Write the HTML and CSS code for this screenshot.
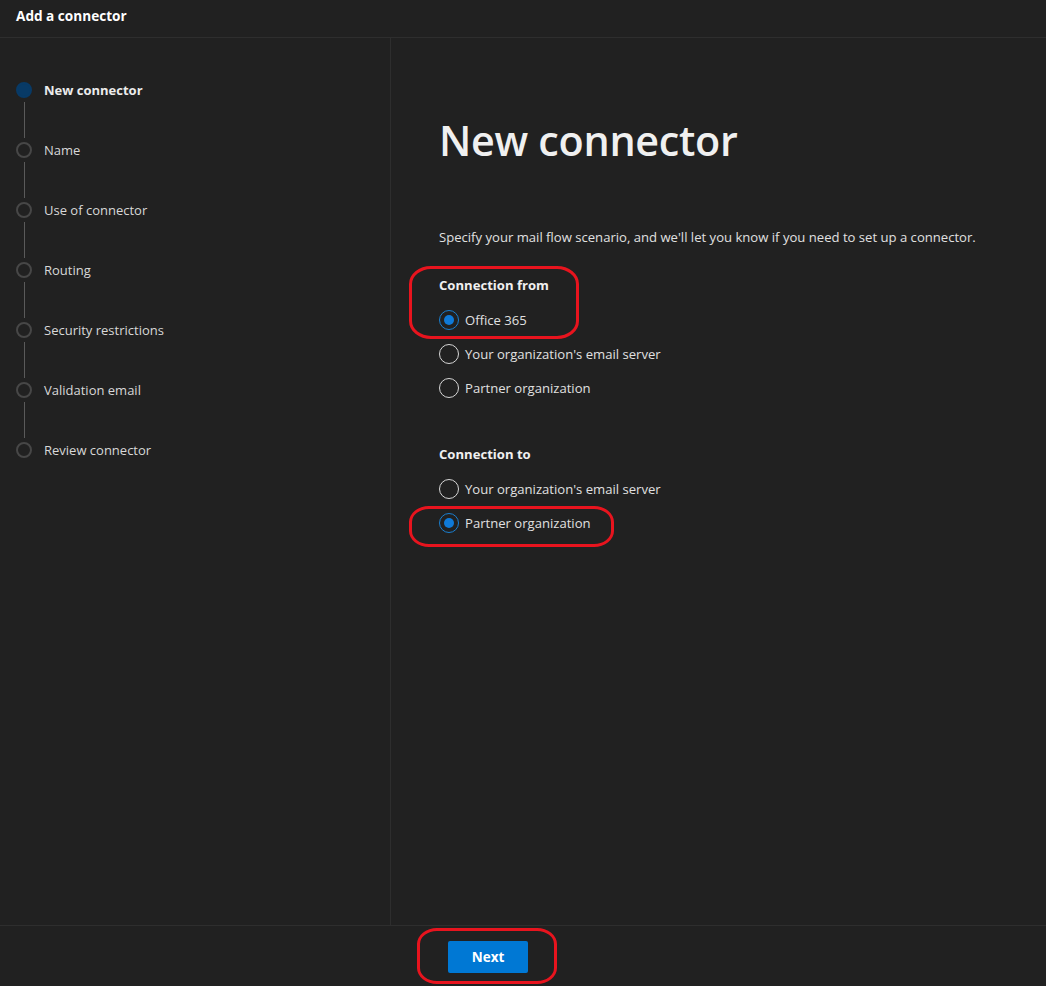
FILE: index.html
```html
<!DOCTYPE html>
<html lang="en">
<head>
<meta charset="utf-8">
<title>Add a connector</title>
<link rel="stylesheet" href="styles.css">
</head>
<body>
<div class="panel">
  <header class="panel-header">Add a connector</header>

  <div class="panel-body">
    <nav class="steps">
      <div class="step step-current"><div class="marker"><span class="dot"></span><span class="rail"></span></div><span class="step-label">New connector</span></div>
      <div class="step"><div class="marker"><span class="dot"></span><span class="rail"></span></div><span class="step-label">Name</span></div>
      <div class="step"><div class="marker"><span class="dot"></span><span class="rail"></span></div><span class="step-label">Use of connector</span></div>
      <div class="step"><div class="marker"><span class="dot"></span><span class="rail"></span></div><span class="step-label">Routing</span></div>
      <div class="step"><div class="marker"><span class="dot"></span><span class="rail"></span></div><span class="step-label">Security restrictions</span></div>
      <div class="step"><div class="marker"><span class="dot"></span><span class="rail"></span></div><span class="step-label">Validation email</span></div>
      <div class="step step-last"><div class="marker"><span class="dot"></span></div><span class="step-label">Review connector</span></div>
    </nav>

    <main class="content">
      <h1 class="title">New connector</h1>
      <p class="intro">Specify your mail flow scenario, and we'll let you know if you need to set up a connector.</p>

      <section class="choice-group">
        <div class="group-label">Connection from</div>
        <div class="radio-list" role="radiogroup">
          <label class="radio"><input type="radio" name="from" checked><span class="radio-mark"></span><span>Office 365</span></label>
          <label class="radio"><input type="radio" name="from"><span class="radio-mark"></span><span>Your organization's email server</span></label>
          <label class="radio"><input type="radio" name="from"><span class="radio-mark"></span><span>Partner organization</span></label>
        </div>
      </section>

      <section class="choice-group choice-group-to">
        <div class="group-label">Connection to</div>
        <div class="radio-list" role="radiogroup">
          <label class="radio"><input type="radio" name="to"><span class="radio-mark"></span><span>Your organization's email server</span></label>
          <label class="radio"><input type="radio" name="to" checked><span class="radio-mark"></span><span>Partner organization</span></label>
        </div>
      </section>
    </main>
  </div>

  <footer class="panel-footer">
    <button class="btn-primary" type="button">Next</button>
  </footer>

  <!-- hand-drawn red highlight rings -->
  <span class="ring ring-from"></span>
  <span class="ring ring-to"></span>
  <span class="ring ring-next"></span>
</div>
</body>
</html>
```

FILE: styles.css
```css
* { box-sizing: border-box; }

html, body {
  margin: 0;
  padding: 0;
  background: #212121;
}

body {
  font-family: "Open Sans", "Noto Sans", Arial, sans-serif;
  color: #e8e8e8;
  font-size: 13.1px;
}

.panel {
  position: relative;
  width: 1046px;
  height: 986px;
  display: flex;
  flex-direction: column;
  background: #212121;
}

.panel-header {
  height: 38px;
  padding: 7px 0 0 16px;
  border-bottom: 1px solid #2e2e2e;
  font-size: 13.6px;
  font-weight: 700;
  line-height: 18px;
  color: #ffffff;
}

.panel-body {
  flex: 1;
  display: flex;
  min-height: 0;
}

/* left step rail */
.steps {
  width: 391px;
  flex: none;
  border-right: 1px solid #2e2e2e;
  padding: 44px 0 0 16px;
}

.step {
  display: flex;
  align-items: flex-start;
  gap: 12px;
  height: 60px;
}

.step-last { height: auto; }

.marker {
  width: 16px;
  display: flex;
  flex-direction: column;
  align-items: center;
}

.dot {
  width: 16px;
  height: 16px;
  border-radius: 50%;
  border: 2px solid #474747;
}

.step-current .dot {
  background: #083a66;
  border-color: #083a66;
}

.rail {
  width: 1px;
  height: 36px;
  margin: 4px 0;
  background: #5a5a5a;
}

.step-label {
  line-height: 16px;
  color: #d8d8d8;
  font-size: 13px;
}

.step-current .step-label {
  font-weight: 700;
  color: #ececec;
}

/* main form */
.content {
  flex: 1;
  padding: 76px 0 0 48px;
}

.title {
  margin: 0;
  font-size: 41.3px;
  line-height: 52px;
  font-weight: 600;
  color: #f0f0f0;
  letter-spacing: -0.3px;
}

.intro {
  margin: 61px 0 0;
  line-height: 20px;
  color: #e0e0e0;
}

.choice-group {
  margin-top: 28px;
}

.choice-group-to { margin-top: 46px; }

.group-label {
  font-weight: 700;
  line-height: 20px;
  color: #f0f0f0;
}

.radio-list {
  margin-top: 15px;
  display: flex;
  flex-direction: column;
  gap: 14px;
}

.radio {
  display: flex;
  align-items: center;
  gap: 6px;
  height: 20px;
  line-height: 20px;
  color: #e0e0e0;
  cursor: pointer;
}

.radio input {
  position: absolute;
  opacity: 0;
  width: 0;
  height: 0;
}

.radio-mark {
  width: 20px;
  height: 20px;
  flex: none;
  border-radius: 50%;
  border: 1px solid #d6d6d6;
  display: flex;
  align-items: center;
  justify-content: center;
}

.radio input:checked + .radio-mark {
  border-color: #1a7fd0;
}

.radio input:checked + .radio-mark::after {
  content: "";
  width: 10px;
  height: 10px;
  border-radius: 50%;
  background: #0f7ad8;
}

/* footer */
.panel-footer {
  height: 61px;
  border-top: 1px solid #2e2e2e;
  display: flex;
  align-items: center;
  padding: 2px 0 0 448px;
}

.btn-primary {
  width: 80px;
  height: 32px;
  border: 0;
  border-radius: 2px;
  background: #0078d4;
  color: #ffffff;
  font-family: inherit;
  font-size: 13.5px;
  font-weight: 700;
  cursor: pointer;
}

/* red marker rings drawn over the form */
.ring {
  position: absolute;
  border: 3px solid #e8141e;
  border-radius: 22px / 18px;
  pointer-events: none;
}

.ring-from { left: 409px; top: 266px; width: 170px; height: 73px; }
.ring-to   { left: 409px; top: 506px; width: 205px; height: 41px; border-radius: 20px / 16px; }
.ring-next { left: 417px; top: 928px; width: 140px; height: 56px; border-radius: 20px / 16px; }
```
